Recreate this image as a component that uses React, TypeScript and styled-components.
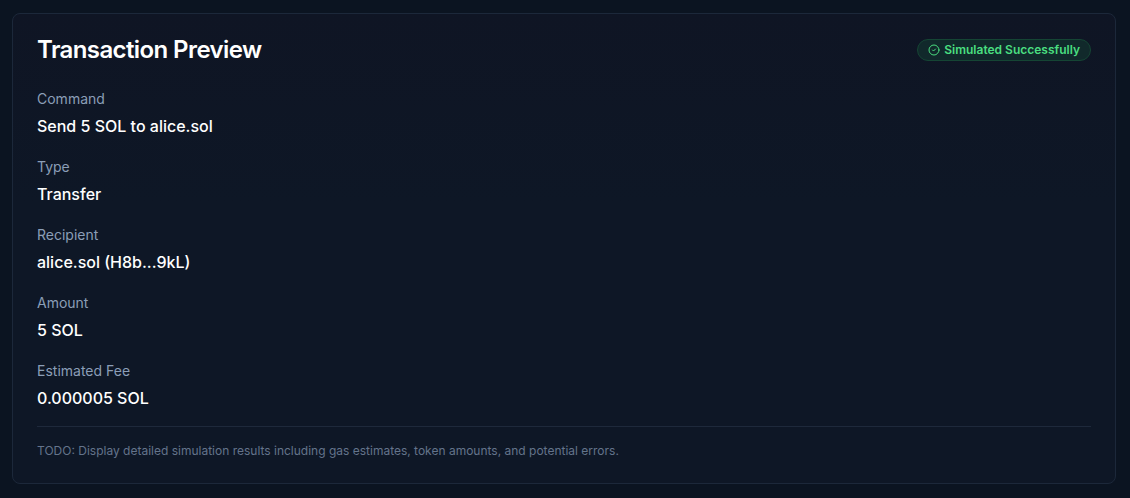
import React from "react";
import styled, { createGlobalStyle } from "styled-components";
import { CircleCheck } from "lucide-react";

const GlobalStyle = createGlobalStyle`
  *, *::before, *::after { box-sizing: border-box; }
  body {
    margin: 0;
    min-height: 100vh;
    background: #0b1421;
    color: #ffffff;
    font-family: Inter, "Liberation Sans", sans-serif;
    font-size: 16px;
    line-height: 24px;
  }
`;

const Page = styled.main`
  padding: 13px 14px 14px 12px;
`;

const Card = styled.section`
  padding: 24px;
  border: 1px solid #1c283a;
  border-radius: 8px;
  background: linear-gradient(#0f1524, #0e1726 40%);
`;

const Header = styled.header`
  display: flex;
  align-items: center;
  justify-content: space-between;
  margin-bottom: 24px;
`;

const Title = styled.h2`
  margin: 0;
  font-size: 24px;
  line-height: 24px;
  font-weight: 600;
  letter-spacing: -0.025em;
`;

const Badge = styled.span`
  display: inline-flex;
  align-items: center;
  gap: 4px;
  padding: 2px 10px;
  border: 1px solid #154534;
  border-radius: 999px;
  background: #11292b;
  color: #4ade80;
  font-size: 12px;
  line-height: 16px;
  font-weight: 600;
`;

const Details = styled.dl`
  display: flex;
  flex-direction: column;
  gap: 16px;
  margin: 0;
`;

const Detail = styled.div`
  display: flex;
  flex-direction: column;
  gap: 2px;
`;

const Label = styled.dt`
  color: #8b9eb7;
  font-size: 14px;
  line-height: 26px;
`;

const Value = styled.dd`
  margin: 0;
  font-weight: 500;
`;

const Note = styled.p`
  margin: 16px 0 0;
  padding-top: 16px;
  border-top: 1px solid #1e293b;
  color: #64748b;
  font-size: 12px;
  line-height: 16px;
`;

const details = [
  { label: "Command", value: "Send 5 SOL to alice.sol" },
  { label: "Type", value: "Transfer" },
  { label: "Recipient", value: "alice.sol (H8b...9kL)" },
  { label: "Amount", value: "5 SOL" },
  { label: "Estimated Fee", value: "0.000005 SOL" },
];

export default function App() {
  return (
    <>
      <GlobalStyle />
      <Page>
        <Card>
          <Header>
            <Title>Transaction Preview</Title>
            <Badge>
              <CircleCheck size={12} aria-hidden="true" />
              Simulated Successfully
            </Badge>
          </Header>
          <Details>
            {details.map(({ label, value }) => (
              <Detail key={label}>
                <Label>{label}</Label>
                <Value>{value}</Value>
              </Detail>
            ))}
          </Details>
          <Note>
            TODO: Display detailed simulation results including gas estimates, token amounts, and
            potential errors.
          </Note>
        </Card>
      </Page>
    </>
  );
}
